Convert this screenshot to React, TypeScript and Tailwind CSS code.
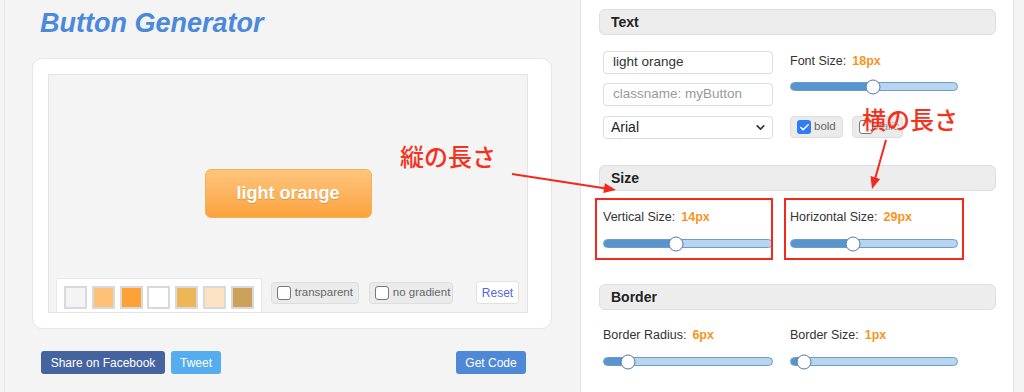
import { ChevronDown, Check } from 'lucide-react';

const swatches = ['#f4f4f4', '#ffc177', '#fea136', '#ffffff', '#eeb655', '#fde1c3', '#cda15a'];

function Slider({ pos, className }: { pos: number; className: string }) {
  return (
    <div className={`relative h-[9px] rounded-full border border-[#6d9ad0] bg-[#b8d5ef] ${className}`}>
      <div className="h-full rounded-l-full bg-[#5795cc]" style={{ width: `${pos * 100}%` }} />
      <div
        className="absolute top-1/2 h-[15px] w-[15px] -translate-x-1/2 -translate-y-1/2 rounded-full border-[1.5px] border-[#4e79b3] bg-white"
        style={{ left: `${pos * 100}%` }}
      />
    </div>
  );
}

function Label({ name, value }: { name: string; value: string }) {
  return (
    <div className="flex h-[18px] items-center gap-[6px] text-[12.5px] text-[#333]">
      <span>{name}</span>
      <span className="font-bold text-[#f7941d]">{value}</span>
    </div>
  );
}

function Header({ title }: { title: string }) {
  return (
    <div className="flex h-[26px] items-center rounded-[6px] border border-[#dedede] bg-[#ededed] pl-[11px] text-[14px] font-bold text-[#222]">
      {title}
    </div>
  );
}

function Box({ checked }: { checked?: boolean }) {
  if (checked) {
    return (
      <span className="flex h-[14px] w-[14px] items-center justify-center rounded-[3px] bg-[#2f7cf6]">
        <Check size={11} strokeWidth={3.5} className="text-white" />
      </span>
    );
  }
  return <span className="h-[14px] w-[14px] rounded-[3px] border border-[#777] bg-white" />;
}

export default function App() {
  return (
    <div className="relative flex h-[392px] w-[1024px] overflow-hidden bg-[#f4f4f4] font-['Liberation_Sans',Arial,sans-serif]">
      {/* left: preview */}
      <div className="w-[580px] shrink-0 pl-[4px]">
        <div className="h-full border-l border-[#e6e6e6]">
          <div className="pl-[35px] pt-[7px] text-[27px] leading-[32px] font-bold italic text-[#4a89dc]">
            Button Generator
          </div>

          <div className="mt-[19px] ml-[27px] h-[271px] w-[520px] rounded-[10px] border border-[#e6e6e6] bg-white pt-[15px] pr-[23px] pb-[15px] pl-[15px]">
            <div className="flex h-full flex-col border border-[#e4e4e4] bg-[#f4f4f4] pt-[94px]">
              <div className="flex justify-center">
                <div className="flex h-[49px] w-[167px] items-center justify-center rounded-[6px] border border-[#eeb44f] bg-linear-to-b from-[#ffc57c] to-[#fba23c] text-[18px] font-bold text-white [text-shadow:0_1px_0_#d9963f]">
                  light orange
                </div>
              </div>

              <div className="mt-auto flex items-start pl-[7px] pr-[8px]">
                <div className="flex h-[34px] gap-[4.8px] rounded-t-[2px] border border-b-0 border-[#e8e8e8] bg-white px-[7px] pt-[7px]">
                  {swatches.map((c) => (
                    <div key={c} className="h-[23px] w-[23px] border-2 border-[#d6dae0]" style={{ backgroundColor: c }} />
                  ))}
                </div>
                <div className="mt-[4px] ml-[9px] flex h-[22px] w-[88px] items-center gap-[4px] rounded-[4px] border border-[#dddddd] bg-[#ebebeb] pl-[5px] text-[11.5px] text-[#666]">
                  <Box />
                  transparent
                </div>
                <div className="mt-[4px] ml-[10px] flex h-[22px] w-[84px] items-center gap-[4px] rounded-[4px] border border-[#dddddd] bg-[#ebebeb] pl-[5px] text-[11.5px] text-[#666]">
                  <Box />
                  no gradient
                </div>
                <div className="mt-[3px] ml-auto flex h-[23px] w-[43px] items-center justify-center rounded-[3px] border border-[#e2e2e2] bg-white text-[12px] text-[#5468e0]">
                  Reset
                </div>
              </div>
            </div>
          </div>

          <div className="mt-[22px] ml-[36px] flex w-[485px] gap-[6px] text-[12px] text-white">
            <div className="flex h-[23px] w-[124px] items-center justify-center rounded-[3px] bg-[#45639e]">Share on Facebook</div>
            <div className="flex h-[23px] w-[50px] items-center justify-center rounded-[3px] bg-[#55acee]">Tweet</div>
            <div className="ml-auto flex h-[23px] w-[70px] items-center justify-center rounded-[3px] bg-[#4f88d6]">Get Code</div>
          </div>
        </div>
      </div>

      {/* right: settings */}
      <div className="h-full w-[434px] shrink-0 border-x border-[#e4e4e4] bg-white pt-[9px] pr-[17px] pl-[18px]">
        <Header title="Text" />
        <div className="mt-[16px] flex gap-[17px] pl-[4px]">
          <div className="flex w-[170px] flex-col">
            <div className="flex h-[23px] items-center rounded-[4px] border border-[#dcdcdc] pl-[9px] text-[13.5px] text-[#333]">light orange</div>
            <div className="mt-[9px] flex h-[23px] items-center rounded-[4px] border border-[#dcdcdc] pl-[9px] text-[13.5px] text-[#9a9a9a]">classname: myButton</div>
            <div className="mt-[10px] flex h-[23px] items-center justify-between rounded-[4px] border border-[#dcdcdc] pr-[5px] pl-[7px] text-[14px] text-[#222]">
              Arial
              <ChevronDown size={13} strokeWidth={3} className="text-[#333]" />
            </div>
          </div>
          <div className="flex w-[168px] flex-col pt-[1px]">
            <Label name="Font Size:" value="18px" />
            <Slider pos={0.494} className="mt-[12px] w-[168px]" />
            <div className="mt-[25px] flex gap-[9px]">
              <div className="flex h-[22px] w-[53px] items-center gap-[3px] rounded-[4px] border border-[#dddddd] bg-[#ebebeb] pl-[6px] text-[11.5px] text-[#666]">
                <Box checked />
                bold
              </div>
              <div className="flex h-[22px] w-[51px] items-center gap-[3px] rounded-[4px] border border-[#dddddd] bg-[#ebebeb] pl-[6px] text-[11.5px] text-[#999] italic">
                <Box />
                italic
              </div>
            </div>
          </div>
        </div>

        <div className="mt-[26px]">
          <Header title="Size" />
        </div>
        <div className="mt-[17px] flex gap-[17px] pl-[4px]">
          <div className="flex w-[170px] flex-col">
            <Label name="Vertical Size:" value="14px" />
            <Slider pos={0.43} className="mt-[13px] w-[170px]" />
          </div>
          <div className="flex w-[168px] flex-col">
            <Label name="Horizontal Size:" value="29px" />
            <Slider pos={0.375} className="mt-[13px] w-[168px]" />
          </div>
        </div>

        <div className="mt-[36px]">
          <Header title="Border" />
        </div>
        <div className="mt-[16px] flex gap-[17px] pl-[4px]">
          <div className="flex w-[170px] flex-col">
            <Label name="Border Radius:" value="6px" />
            <Slider pos={0.142} className="mt-[13px] w-[170px]" />
          </div>
          <div className="flex w-[168px] flex-col">
            <Label name="Border Size:" value="1px" />
            <Slider pos={0.077} className="mt-[13px] w-[168px]" />
          </div>
        </div>
      </div>

      {/* annotations */}
      <div className="absolute top-[198px] left-[595px] h-[62px] w-[178px] border-2 border-[#f2291b]" />
      <div className="absolute top-[198px] left-[784px] h-[62px] w-[180px] border-2 border-[#f2291b]" />
      <span className="absolute top-[144px] left-[400px] font-['Noto_Sans_CJK_JP',sans-serif] text-[24px] leading-[24px] font-medium text-[#f5311e]">
        縦の長さ
      </span>
      <span className="absolute top-[107px] left-[862px] font-['Noto_Sans_CJK_JP',sans-serif] text-[24px] leading-[24px] font-medium text-[#f5311e]">
        横の長さ
      </span>
      <svg className="pointer-events-none absolute inset-0" width="1024" height="392">
        <line x1="512" y1="174" x2="606" y2="188.5" stroke="#f2291b" strokeWidth="2" />
        <polygon points="616,190 603.3,193.1 604.9,183.3" fill="#f2291b" />
        <line x1="886" y1="140" x2="875" y2="179" stroke="#f2291b" strokeWidth="2" />
        <polygon points="872,189 880.1,178.9 870.5,176.1" fill="#f2291b" />
      </svg>
    </div>
  );
}
